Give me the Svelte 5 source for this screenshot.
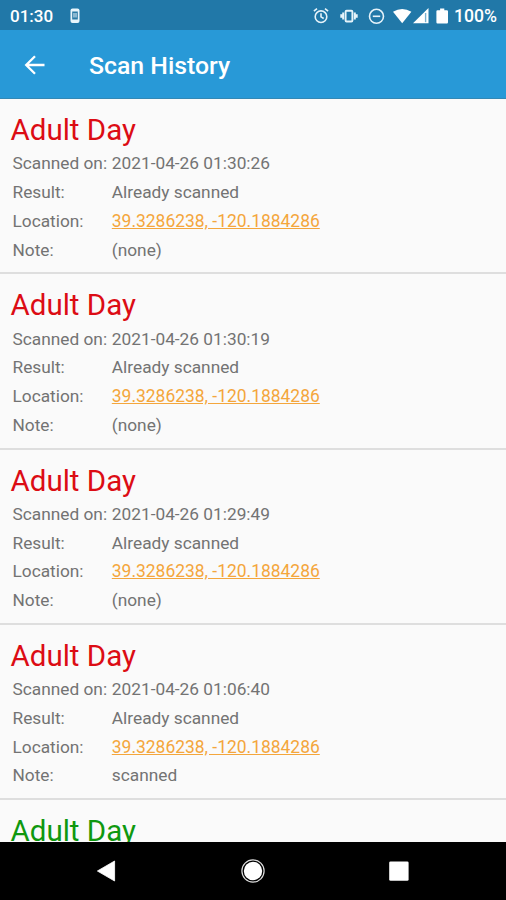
<script>
	const location = '39.3286238, -120.1884286';

	let scans = $state([
		{ title: 'Adult Day', time: '2021-04-26 01:30:26', result: 'Already scanned', location, note: '(none)' },
		{ title: 'Adult Day', time: '2021-04-26 01:30:19', result: 'Already scanned', location, note: '(none)' },
		{ title: 'Adult Day', time: '2021-04-26 01:29:49', result: 'Already scanned', location, note: '(none)' },
		{ title: 'Adult Day', time: '2021-04-26 01:06:40', result: 'Already scanned', location, note: 'scanned' },
		{ title: 'Adult Day', valid: true }
	]);
</script>

<div class="screen">
	<div class="status">
		<span class="clock">01:30</span>
		<svg class="phone" width="10" height="16" viewBox="0 0 10 16">
			<rect x="0.5" y="0.5" width="9" height="14.5" rx="2" fill="#e9f5fb" />
			<rect x="2.2" y="3.5" width="5.6" height="8" fill="#2b7ba6" />
			<path d="M4 5v4.5M6 5v4.5" stroke="#e9f5fb" stroke-width="1" />
		</svg>
		<svg class="system" width="140" height="20" viewBox="0 0 140 20">
			<g fill="none" stroke="#e6f3fa" stroke-width="1.6">
				<circle cx="8" cy="10.7" r="5.8" />
				<path d="M0.9 5.2 4 2.6M12 2.6l3.1 2.6M8 7.3v3.6l2.7 1.6" />
				<rect x="32.6" y="4.7" width="6.8" height="10.8" rx="1" stroke-width="1.9" />
				<path d="M30.2 6.5v7M41.8 6.5v7M28.3 8.2v3.6M43.7 8.2v3.6" stroke-width="2" />
				<circle cx="63.5" cy="10.3" r="7" />
				<path d="M59.8 10.3h7.4" />
			</g>
			<g fill="#fff">
				<path d="M80 5.8Q89.2 0 98.4 5.8L89.2 17.2z" />
				<path d="M100 17.2 115.5 2v15.2z" />
				<path d="M124.5 4.2h2.6V2.5h4.2v1.7h2.6q1.1 0 1.1 1.1v11q0 1.2-1.1 1.2h-9.4q-1.1 0-1.1-1.2v-11q0-1.1 1.1-1.1z" />
			</g>
			<path d="M112.6 7v9.2" stroke="#78b1cf" stroke-width="1.4" />
		</svg>
		<span class="percent">100%</span>
	</div>

	<header>
		<button aria-label="Back">
			<svg width="22" height="22" viewBox="0 0 22 22">
				<path d="M20.5 11H2.2M11 2.2 2.2 11l8.8 8.8" fill="none" stroke="#fff" stroke-width="2.3" />
			</svg>
		</button>
		<h1>Scan History</h1>
	</header>

	<main>
		{#each scans as scan}
			<section class="scan">
				<h2 class={scan.valid ? 'green' : 'red'}>{scan.title}</h2>
				{#if scan.time}
					<dl>
						<dt>Scanned on:</dt>
						<dd>{scan.time}</dd>
						<dt>Result:</dt>
						<dd>{scan.result}</dd>
						<dt>Location:</dt>
						<dd class="location"><a href="geo:{scan.location}">{scan.location}</a></dd>
						<dt>Note:</dt>
						<dd>{scan.note}</dd>
					</dl>
				{/if}
			</section>
		{/each}
	</main>

	<nav>
		<svg width="24" height="24" viewBox="0 0 24 24">
			<path d="M3.4 12 20.6 2v20z" fill="#fff" stroke="#fff" stroke-width="0.8" stroke-linejoin="round" />
		</svg>
		<svg width="24" height="24" viewBox="0 0 24 24">
			<circle cx="12" cy="12" r="11.1" fill="none" stroke="#ddd" stroke-width="1.2" />
			<circle cx="12" cy="12" r="9.2" fill="#fff" />
		</svg>
		<svg width="24" height="24" viewBox="0 0 24 24">
			<rect x="2.2" y="2.4" width="19.4" height="19.4" rx="1.4" fill="#fff" />
		</svg>
	</nav>
</div>

<style>
	:global(body) {
		margin: 0;
	}

	.screen {
		display: flex;
		flex-direction: column;
		width: 506px;
		height: 900px;
		overflow: hidden;
		background-color: #fafafa;
		font-family: Roboto, sans-serif;
	}

	.status {
		display: flex;
		align-items: center;
		flex: none;
		box-sizing: border-box;
		height: 30px;
		padding: 2px 9px 0 10px;
		background-color: #2178a8;
		color: #fff;
		font-size: 17px;
		font-weight: 500;
	}

	.phone {
		margin-left: 17px;
	}

	.system {
		margin-left: auto;
		margin-right: 1px;
	}

	.percent {
		font-size: 17.6px;
	}

	header {
		display: flex;
		align-items: center;
		flex: none;
		box-sizing: border-box;
		height: 69px;
		padding: 0 24px 0 24px;
		border-bottom: 1px solid #3388b5;
		background-color: #2899d7;
	}

	header button {
		width: 22px;
		height: 22px;
		margin-top: 1px;
		padding: 0;
		border: 0;
		background: none;
		cursor: pointer;
	}

	h1 {
		margin: 4px 0 0 43px;
		color: #fff;
		font-size: 24.8px;
		font-weight: 500;
		line-height: 30px;
	}

	main {
		flex: 1;
		min-height: 0;
		overflow: hidden;
	}

	.scan {
		box-sizing: border-box;
		height: 175.3px;
		padding: 13px 11px 0 10.5px;
		border-bottom: 2px solid #dedede;
	}

	h2 {
		margin: 0;
		font-size: 29.5px;
		font-weight: 400;
		line-height: 37.4px;
	}

	.red {
		color: #dc0c14;
	}

	.green {
		color: #0f980f;
	}

	dl {
		display: grid;
		grid-template-columns: 99.3px 1fr;
		margin: 0 0 0 2px;
		color: #737373;
		font-size: 17.3px;
		line-height: 28.7px;
		white-space: nowrap;
	}

	dd {
		margin: 0;
	}

	.location {
		font-size: 17.45px;
	}

	a {
		color: #f4a63c;
	}

	nav {
		display: flex;
		align-items: center;
		justify-content: space-between;
		flex: none;
		box-sizing: border-box;
		height: 58px;
		padding: 0 95px 0 94px;
		background-color: #000;
	}
</style>
